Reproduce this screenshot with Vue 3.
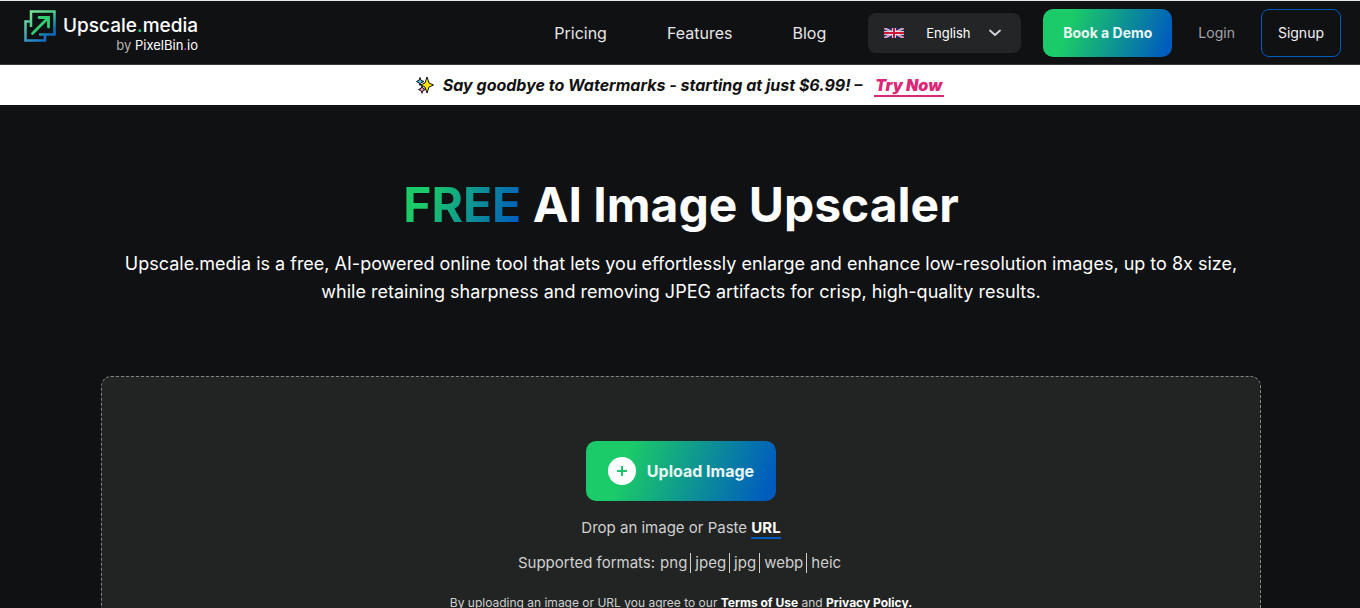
<script setup>
import { ref } from 'vue'

const language = ref('English')
const languages = ['English', 'Français', 'Deutsch', 'Español']
const links = ['Pricing', 'Features', 'Blog']
const formats = ['png', 'jpeg', 'jpg', 'webp', 'heic']
</script>

<template>
  <div class="page">
    <header class="header">
      <a class="brand" href="#" aria-label="Upscale.media by PixelBin.io">
        <svg class="brand-mark" width="32" height="32" viewBox="0 0 32 32" fill="none">
          <defs>
            <linearGradient id="markFill" x1="8" y1="1" x2="29" y2="29" gradientUnits="userSpaceOnUse">
              <stop offset="0" stop-color="#7be495" />
              <stop offset="0.4" stop-color="#4fd08a" />
              <stop offset="0.75" stop-color="#1478b8" />
              <stop offset="1" stop-color="#0a62c4" />
            </linearGradient>
            <linearGradient id="markEdge" x1="0" y1="10" x2="26" y2="30" gradientUnits="userSpaceOnUse">
              <stop offset="0" stop-color="#6fdc9c" />
              <stop offset="0.5" stop-color="#2f8fc4" />
              <stop offset="1" stop-color="#0a5fc4" />
            </linearGradient>
          </defs>
          <path d="M7 17V1.500H30.500V24.500H15" stroke="url(#markFill)" stroke-width="2.500" />
          <path d="M7 11.500H1.500V30.500H21V25" stroke="url(#markEdge)" stroke-width="2.500" />
          <path d="M8.500 23.500L24.500 7.500M15 7.500H24.500V17" stroke="#2fd072" stroke-width="2.800" stroke-linecap="round" />
        </svg>
        <span class="brand-text">
          <span class="brand-name">Upscale<span class="dot-green">.</span>media</span>
          <span class="brand-by">by <span class="brand-owner">PixelBin<span class="dot-pink">.</span>io</span></span>
        </span>
      </a>

      <nav class="nav">
        <a v-for="link in links" :key="link" href="#">{{ link }}</a>
      </nav>

      <label class="language">
        <svg class="flag" width="20" height="10" viewBox="0 0 20 10">
          <rect width="20" height="10" fill="#1d2d74" />
          <path d="M0 0L20 10M20 0L0 10" stroke="#fff" stroke-width="2" />
          <path d="M0 0L20 10M20 0L0 10" stroke="#d0173a" stroke-width="0.700" />
          <path d="M10 0V10M0 5H20" stroke="#fff" stroke-width="3.600" />
          <path d="M10 0V10M0 5H20" stroke="#d0173a" stroke-width="2" />
        </svg>
        <select v-model="language" aria-label="Language">
          <option v-for="item in languages" :key="item">{{ item }}</option>
        </select>
        <svg class="chevron" width="12" height="8" viewBox="0 0 12 8" fill="none">
          <path d="M1 1.500L6 6L11 1.500" stroke="#d4d4dc" stroke-width="1.800" stroke-linecap="round" stroke-linejoin="round" />
        </svg>
      </label>

      <button class="demo" type="button">Book a Demo</button>
      <a class="login" href="#">Login</a>
      <button class="signup" type="button">Signup</button>
    </header>

    <aside class="banner">
      <svg class="sparkles" width="18" height="18" viewBox="0 0 18 18" stroke="#111" stroke-linejoin="round">
        <path d="M4 1.500L5 4.300L8 5.500L5 6.700L4 9.500L3 6.700L0.500 5.500L3 4.300Z" fill="#4fc3e8" />
        <path d="M6 10L7 12.400L9.500 13.500L7 14.600L6 17.300L5 14.600L2.500 13.500L5 12.400Z" fill="#f08bb5" />
        <path d="M11 1L13 7L17.500 9L13 11L11 17L9 11L4.800 9L9 7Z" fill="#ffe600" />
      </svg>
      <span>Say goodbye to Watermarks - starting at just $6.99! –</span>
      <a class="try" href="#">Try Now</a>
    </aside>

    <main class="main">
      <h1><span class="free">FREE</span> AI Image Upscaler</h1>
      <p class="lead">
        Upscale.media is a free, AI-powered online tool that lets you effortlessly enlarge and enhance low-resolution images, up to 8x size, while retaining sharpness and removing JPEG artifacts for crisp, high-quality results.
      </p>

      <section class="dropzone">
        <button class="upload" type="button">
          <svg width="28" height="28" viewBox="0 0 28 28">
            <circle cx="14" cy="14" r="14" fill="#fff" />
            <path d="M14 9V19M9 14H19" stroke="#1ec56a" stroke-width="2" />
          </svg>
          Upload Image
        </button>
        <p class="drop">Drop an image or Paste <a class="url" href="#">URL</a></p>
        <p class="formats">
          <span class="formats-label">Supported formats:</span>
          <span v-for="format in formats" :key="format" class="format">{{ format }}</span>
        </p>
        <p class="terms">
          By uploading an image or URL you agree to our <a href="#">Terms of Use</a> and <a href="#">Privacy Policy.</a>
        </p>
      </section>
    </main>
  </div>
</template>

<style>
html {
  background: #101113;
  scrollbar-width: none;
}

body {
  margin: 0;
}
</style>

<style scoped>
.page {
  min-height: 100vh;
  background: #101113;
  color: #fff;
  font-family: Inter, "Liberation Sans", sans-serif;
}

a {
  color: inherit;
  text-decoration: none;
}

button,
select {
  font-family: inherit;
  cursor: pointer;
}

.header {
  display: flex;
  align-items: center;
  box-sizing: border-box;
  height: 65px;
  padding: 0 19px 0 24px;
  border-top: 1px solid #e6e6ee;
  border-bottom: 1px solid #36373a;
}

.brand {
  display: flex;
  align-items: flex-start;
  gap: 7px;
  margin-right: auto;
  padding-bottom: 4px;
}

.brand-text {
  display: flex;
  flex-direction: column;
  align-items: flex-end;
  padding-top: 4px;
}

.brand-name {
  font-size: 19px;
  font-weight: 500;
  line-height: 24px;
}

.brand-by {
  color: #b5b5b8;
  font-size: 13px;
  line-height: 14px;
}

.brand-owner {
  color: #fff;
}

.dot-green {
  color: #1ec56a;
}

.dot-pink {
  color: #d63bd0;
}

.nav {
  display: flex;
  gap: 60px;
  margin-right: 42px;
  color: #e6e6e8;
  font-size: 16px;
}

.language {
  position: relative;
  display: flex;
  align-items: center;
  width: 153px;
  height: 40px;
  margin-right: 22px;
  border-radius: 8px;
  background: #242527;
}

.language select {
  width: 100%;
  height: 100%;
  padding: 0 40px 0 58px;
  border: 0;
  border-radius: 8px;
  background: transparent;
  color: #fff;
  font-size: 13px;
  appearance: none;
}

.language option {
  color: #111;
}

.flag,
.chevron {
  position: absolute;
  pointer-events: none;
}

.flag {
  left: 16px;
}

.chevron {
  right: 20px;
}

.demo {
  height: 48px;
  padding: 0 20px;
  border: 0;
  border-radius: 10px;
  background: linear-gradient(110deg, #1bca68 22%, #005bbf 95%);
  color: #e9f6f4;
  font-size: 14px;
  font-weight: 700;
}

.login {
  margin: 0 26px;
  color: #a5a5ac;
  font-size: 14px;
}

.signup {
  height: 48px;
  padding: 0 16px;
  border: 1px solid #005bbf;
  border-radius: 8px;
  background: transparent;
  color: #f2f2f4;
  font-size: 14px;
}

.banner {
  display: flex;
  align-items: center;
  justify-content: center;
  height: 40px;
  background: #fff;
  color: #111;
  font-size: 16px;
  font-style: italic;
  font-weight: 700;
}

.sparkles {
  margin-right: 9px;
}

.try {
  margin-left: 12px;
  padding: 2px 2px 0 1px;
  border-bottom: 2px solid #dc2777;
  color: #dc2777;
  font-weight: 900;
}

.main {
  padding: 70px 99px 0 101px;
  text-align: center;
}

h1 {
  margin: 0;
  font-size: 48px;
  font-weight: 700;
  line-height: 60px;
}

.free {
  background: linear-gradient(110deg, #1bca68 22%, #005bbf 95%);
  background-clip: text;
  color: transparent;
}

.lead {
  margin: 15px 0 0;
  font-size: 18px;
  line-height: 28px;
}

.dropzone {
  display: flex;
  flex-direction: column;
  align-items: center;
  margin-top: 70px;
  padding: 64px 20px 80px;
  border: 1px dashed #858585;
  border-radius: 10px;
  background: #222423;
  color: #d0d0d0;
}

.upload {
  display: flex;
  align-items: center;
  gap: 11px;
  height: 60px;
  padding: 0 22px;
  border: 0;
  border-radius: 10px;
  background: linear-gradient(110deg, #1bca68 22%, #005bbf 95%);
  color: #e9f6f4;
  font-size: 16px;
  font-weight: 700;
}

.drop,
.formats,
.terms {
  margin: 0;
}

.drop {
  margin-top: 17px;
  font-size: 15px;
  line-height: 20px;
}

.url {
  border-bottom: 2px solid #005bbf;
  color: #fff;
  font-weight: 700;
}

.formats {
  display: flex;
  margin-top: 15px;
  font-size: 15px;
  line-height: 20px;
}

.formats-label {
  margin-right: 1px;
}

.format {
  padding: 0 3px 0 4px;
}

.format + .format {
  border-left: 1px solid #d0d0d0;
}

.terms {
  margin-top: 22px;
  font-size: 12px;
  line-height: 16px;
}

.terms a {
  color: #fff;
  font-weight: 700;
}
</style>
